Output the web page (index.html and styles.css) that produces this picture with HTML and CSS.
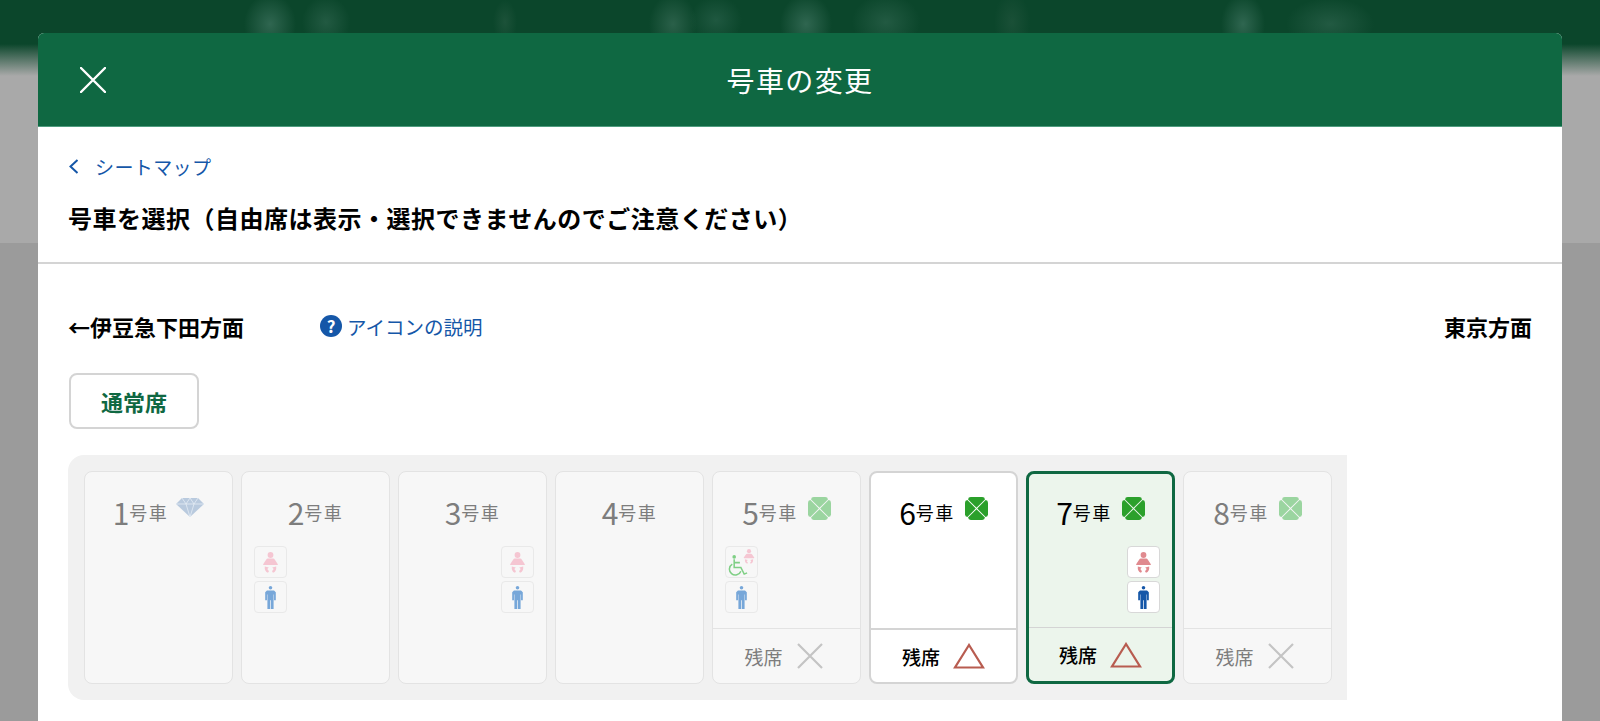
FILE: index.html
```html
<!DOCTYPE html>
<html lang="ja">
<head>
    <meta charset="UTF-8">
    <meta name="viewport" content="width=device-width, initial-scale=1.0">
    <title>号車の変更</title>
    <link rel="stylesheet" href="styles.css">
</head>
<body>
<svg class="icon-defs" width="0" height="0" aria-hidden="true">
    <symbol id="i-green" viewBox="0 0 24 24">
        <g fill="currentColor">
            <path id="lobe" d="M12 11.300L3.200 2.500Q3.400 0 6 0H18Q20.600 0 20.800 2.500Z"/>
            <use href="#lobe" transform="rotate(90 12 12)"/>
            <use href="#lobe" transform="rotate(180 12 12)"/>
            <use href="#lobe" transform="rotate(270 12 12)"/>
        </g>
    </symbol>
    <symbol id="i-baby" viewBox="0 0 15 21">
        <g fill="currentColor">
            <circle cx="7.500" cy="3" r="2.900"/>
            <path d="M4.800 6.500h5.400q1 0 1.700 1.200L15 12.400l-.5.700H.5l-.5-.7 3.100-4.700Q3.800 6.500 4.800 6.500z"/>
            <path d="M1.800 14.500l4 1-1.500 1.500 1.700 2.300-1 1.500Q1.300 19.500 1.800 14.500z"/>
            <path d="M13.200 14.500l-4 1 1.500 1.500-1.700 2.300 1 1.500Q13.700 19.500 13.200 14.500z"/>
        </g>
    </symbol>
    <symbol id="i-man" viewBox="0 0 12 26">
        <circle cx="6" cy="2" r="2" fill="currentColor"/>
        <path d="M2 5h8l2 2v9h-2V9.500h-.5V26H6.400V16h-.8V26H2.500V9.500H2V16H0V7z" fill="currentColor"/>
    </symbol>
    <symbol id="i-wheel" viewBox="0 0 20 22">
        <circle cx="6" cy="2" r="1.900" fill="currentColor"/>
        <path d="M6 4.500v8.500h7l3.500 7 3-1.300M6 8h6" fill="none" stroke="currentColor" stroke-width="1.600"/>
        <path d="M4 9.500a6.200 6.200 0 1 0 9 7.500" fill="none" stroke="currentColor" stroke-width="1.600"/>
    </symbol>
    <symbol id="i-none" viewBox="0 0 26 26">
        <path d="M1 1l24 24M25 1L1 25" stroke="currentColor" stroke-width="2.200"/>
    </symbol>
    <symbol id="i-few" viewBox="0 0 32 26">
        <path d="M16 2L2 24.500h28z" fill="none" stroke="currentColor" stroke-width="2.200"/>
    </symbol>
</svg>

<div class="modal">
    <header class="modal-head">
        <svg class="close" viewBox="0 0 26 26"><path d="M1 1l24 24M25 1L1 25" stroke="#fff" stroke-width="2.400" stroke-linecap="round"/></svg>
        <h1>号車の変更</h1>
    </header>

    <div class="intro">
        <a class="back">
            <svg viewBox="0 0 11 15"><path d="M9.500 1L2.500 7.500l7 6.500" fill="none" stroke="#1557a8" stroke-width="2"/></svg>
            シートマップ
        </a>
        <h2>号車を選択（自由席は表示・選択できませんのでご注意ください）</h2>
    </div>

    <div class="content">
        <div class="direction">
            <span class="dir-label dir-left">←伊豆急下田方面</span>
            <a class="help"><span class="help-mark">?</span>アイコンの説明</a>
            <span class="dir-label dir-right">東京方面</span>
        </div>

        <button class="tab">通常席</button>

        <div class="cars">
            <div class="car off">
                <div class="car-main">
                    <div class="car-name"><b>1</b>号車
                        <svg class="diamond" viewBox="0 0 28 19">
                            <path d="M6 0h16l6 6-14 13L0 6z" fill="#b9cade"/>
                            <path d="M0 6h28M6 0l4 6 4 13 4-13 4-6M10 6l4-6 4 6" fill="none" stroke="#e4ecf5" stroke-width=".8"/>
                        </svg>
                    </div>
                </div>
            </div>

            <div class="car off">
                <div class="car-main">
                    <div class="car-name"><b>2</b>号車</div>
                    <div class="badges">
                        <span class="badge"><svg class="baby"><use href="#i-baby"/></svg></span>
                        <span class="badge"><svg class="man"><use href="#i-man"/></svg></span>
                    </div>
                </div>
            </div>

            <div class="car off">
                <div class="car-main">
                    <div class="car-name"><b>3</b>号車</div>
                    <div class="badges end">
                        <span class="badge"><svg class="baby"><use href="#i-baby"/></svg></span>
                        <span class="badge"><svg class="man"><use href="#i-man"/></svg></span>
                    </div>
                </div>
            </div>

            <div class="car off">
                <div class="car-main">
                    <div class="car-name"><b>4</b>号車</div>
                </div>
            </div>

            <div class="car off">
                <div class="car-main">
                    <div class="car-name"><b>5</b>号車 <svg class="green"><use href="#i-green"/></svg></div>
                    <div class="badges">
                        <span class="badge"><svg class="wheel"><use href="#i-wheel"/></svg><svg class="baby small"><use href="#i-baby"/></svg></span>
                        <span class="badge"><svg class="man"><use href="#i-man"/></svg></span>
                    </div>
                </div>
                <div class="car-foot">残席<svg class="none"><use href="#i-none"/></svg></div>
            </div>

            <div class="car open">
                <div class="car-main">
                    <div class="car-name"><b>6</b>号車 <svg class="green"><use href="#i-green"/></svg></div>
                </div>
                <div class="car-foot">残席<svg class="few"><use href="#i-few"/></svg></div>
            </div>

            <div class="car open selected">
                <div class="car-main">
                    <div class="car-name"><b>7</b>号車 <svg class="green"><use href="#i-green"/></svg></div>
                    <div class="badges end">
                        <span class="badge"><svg class="baby"><use href="#i-baby"/></svg></span>
                        <span class="badge"><svg class="man"><use href="#i-man"/></svg></span>
                    </div>
                </div>
                <div class="car-foot">残席<svg class="few"><use href="#i-few"/></svg></div>
            </div>

            <div class="car off">
                <div class="car-main">
                    <div class="car-name"><b>8</b>号車 <svg class="green"><use href="#i-green"/></svg></div>
                </div>
                <div class="car-foot">残席<svg class="none"><use href="#i-none"/></svg></div>
            </div>
        </div>
    </div>
</div>
</body>
</html>
```

FILE: styles.css
```css
:root {
    --green: #0f6842;
    --blue: #1557a8;
    --text: #000;
}

html, body {
    height: 100%;
}

body {
    margin: 0;
    overflow: hidden;
    box-sizing: border-box;
    padding: 33px 38px 0;
    font-family: "Noto Sans CJK JP", "Noto Sans", sans-serif;
    color: var(--text);
    background:
        radial-gradient(ellipse 26px 30px at 270px 24px, #2f6650, transparent),
        radial-gradient(ellipse 24px 26px at 326px 22px, #225a42, transparent),
        radial-gradient(ellipse 12px 22px at 505px 22px, #1c5239, transparent),
        radial-gradient(ellipse 24px 30px at 673px 24px, #2a6049, transparent),
        radial-gradient(ellipse 26px 24px at 716px 20px, #1f5840, transparent),
        radial-gradient(ellipse 26px 30px at 806px 24px, #2f6650, transparent),
        radial-gradient(ellipse 34px 28px at 886px 22px, #225a42, transparent),
        radial-gradient(ellipse 18px 30px at 1012px 22px, #1a5037, transparent),
        radial-gradient(ellipse 22px 30px at 1243px 24px, #2f6650, transparent),
        radial-gradient(ellipse 44px 26px at 1330px 24px, #225a42, transparent),
        linear-gradient(to bottom, #0b462b 0, #0b462b 44px, #a9a9a9 76px, #a9a9a9 243px, #9b9b9b 243px);
}

.icon-defs {
    position: absolute;
}

.modal {
    height: 100%;
    background: #fff;
    border-radius: 6px 6px 0 0;
    overflow: hidden;
}

.modal-head {
    position: relative;
    height: 94px;
    box-sizing: border-box;
    display: flex;
    align-items: center;
    justify-content: center;
    background: var(--green);
    border-bottom: 1px solid #4f9c7f;
}

.modal-head h1 {
    margin: 0;
    color: #fff;
    font-size: 28px;
    font-weight: 400;
    letter-spacing: .05em;
}

.close {
    position: absolute;
    left: 42px;
    top: 34px;
    width: 26px;
    height: 26px;
}

.intro {
    padding: 24px 30px 0;
    height: 137px;
    box-sizing: border-box;
    border-bottom: 2px solid #d4d4d4;
}

.back {
    display: flex;
    align-items: center;
    gap: 16px;
    height: 30px;
    color: var(--blue);
    font-size: 19px;
    letter-spacing: .4px;
}

.back svg {
    width: 11px;
    height: 15px;
}

.intro h2 {
    margin: 21px 0 0;
    font-size: 24px;
    font-weight: 700;
    line-height: 32px;
    letter-spacing: .5px;
}

.content {
    padding: 0 30px;
}

.direction {
    display: flex;
    align-items: center;
    height: 34px;
    margin-top: 45px;
    font-size: 22px;
}

.dir-label {
    font-weight: 700;
}

.dir-right {
    margin-left: auto;
}

.help {
    display: flex;
    align-items: center;
    gap: 5px;
    margin-left: 76px;
    color: var(--blue);
    font-size: 19.5px;
}

.help-mark {
    width: 22px;
    height: 22px;
    border-radius: 50%;
    background: var(--blue);
    color: #fff;
    font-size: 17px;
    font-weight: 700;
    line-height: 22px;
    text-align: center;
}

.tab {
    display: block;
    width: 130px;
    height: 56px;
    margin: 30px 0 0 1px;
    padding: 0;
    background: #fff;
    border: 2px solid #d4d4d4;
    border-radius: 8px;
    color: var(--green);
    font-family: inherit;
    font-size: 22px;
    font-weight: 700;
}

.cars {
    display: flex;
    gap: 8px;
    box-sizing: border-box;
    width: 1279px;
    height: 245px;
    margin-top: 26px;
    padding: 16px;
    background: #f1f1f1;
    border-radius: 16px 0 0 16px;
}

.car {
    flex: 0 0 149px;
    display: flex;
    flex-direction: column;
    box-sizing: border-box;
    background: #f7f7f7;
    border: 1px solid #e3e3e3;
    border-radius: 8px;
}

.car-main {
    flex: 1;
    padding-top: 22px;
}

.car-name {
    display: flex;
    align-items: center;
    justify-content: center;
    height: 36px;
    font-size: 18px;
    letter-spacing: 1.500px;
    color: #7d7d7d;
}

.car-name b {
    font-size: 30px;
    font-weight: 400;
    letter-spacing: 0;
}

.green {
    width: 23px;
    height: 23px;
    margin: -8px 0 0 10px;
    color: #9bd5a0;
}

.diamond {
    width: 28px;
    height: 19px;
    margin: -10px 0 0 8px;
}

.badges {
    display: flex;
    flex-direction: column;
    gap: 3px;
    margin: 16px 12px 0;
}

.badges.end {
    align-items: flex-end;
}

.badge {
    position: relative;
    display: flex;
    align-items: center;
    justify-content: center;
    width: 33px;
    height: 32px;
    box-sizing: border-box;
    background: #f7f7f7;
    border: 1px solid #e9e9e9;
    border-radius: 4px;
}

.baby {
    width: 15px;
    height: 21px;
    color: #f5c6d2;
}

.baby.small {
    position: absolute;
    top: 2px;
    right: 2px;
    width: 12px;
    height: 15px;
}

.man {
    width: 11px;
    height: 23px;
    color: #77a7d9;
}

.wheel {
    width: 20px;
    height: 21px;
    margin: 6px 8px 0 0;
    color: #7fcf85;
}

.car-foot {
    display: flex;
    align-items: center;
    justify-content: center;
    gap: 14px;
    height: 55px;
    padding-right: 6px;
    box-sizing: border-box;
    border-top: 1px solid #e3e3e3;
    font-size: 19px;
    color: #7d7d7d;
}

.none {
    width: 26px;
    height: 26px;
    color: #c4c4c4;
}

.few {
    width: 32px;
    height: 26px;
    color: #b85c50;
}

.car.open {
    background: #fff;
    border: 2px solid #d4d4d4;
}

.car.open .car-main {
    padding-top: 21px;
}

.car.open .car-name,
.car.open .car-foot {
    color: #000;
}

.car.open .car-foot {
    height: 54px;
    padding-right: 0;
    gap: 13px;
    border-top: 2px solid #d4d4d4;
    font-weight: 500;
}

.car.open .green {
    color: #2ba02b;
}

.car.selected {
    background: #ecf5ec;
    border: 3px solid var(--green);
}

.car.selected .car-main {
    padding-top: 20px;
}

.car.selected .car-foot {
    border-top: 1px solid #d4d4d4;
}

.car.selected .badge {
    background: #fff;
    border-color: #d8d8d8;
}

.car.selected .baby {
    color: #e08a8f;
}

.car.selected .man {
    color: var(--blue);
}
```
